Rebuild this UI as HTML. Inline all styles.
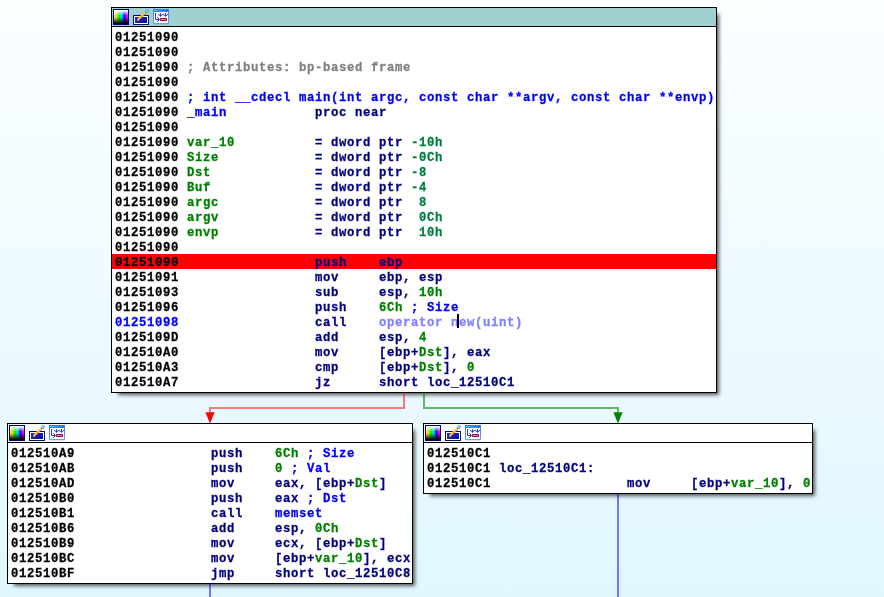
<!DOCTYPE html>
<html><head><meta charset="utf-8"><title>IDA graph view</title>
<style>
html,body{margin:0;padding:0}
body{width:884px;height:597px;overflow:hidden;position:relative;background:#fbfeff;}
#c{position:absolute;left:0;top:0;width:884px;height:597px;overflow:hidden;
background:linear-gradient(to bottom,#fbfeff 0%,#e1f7ff 100%);
font-family:"Liberation Mono",monospace;font-weight:bold;font-size:13.333px;}
.box{position:absolute;border:1px solid #000;background:#fff;box-shadow:4.8px 4.8px 3.8px -2.45px rgba(0,0,0,.65);}
.tb{height:18px;border-bottom:1px solid #000;background:#fff;position:relative}
.sel .tb{background:#a0d0d0}
.tb svg{position:absolute;left:1px;top:1px}
.body{position:absolute;left:0;right:0;top:21px;will-change:transform}
.r{height:15px;line-height:17px;white-space:pre;padding-left:3px;-webkit-text-stroke:0.3px;}
.t{display:inline-block;transform:scaleX(.92);transform-origin:0 0;letter-spacing:.696px}
.hl{background:#ff0000}
.k{color:#000}.g{color:#808080}.b{color:#0000ff}.n{color:#000080}.v{color:#008000}.w{color:#008040}.l{color:#8080ff}
#edges{position:absolute;left:0;top:0}
.cur{position:absolute;left:457px;top:314px;width:2px;height:14px;background:#000}
</style></head>
<body>
<div id="c">
<svg width="0" height="0" style="position:absolute"><defs><linearGradient id="rb" x1="0" x2="1" y1="0" y2="0"><stop offset="0" stop-color="#ffb060"/><stop offset=".08" stop-color="#ffa800"/><stop offset=".18" stop-color="#f0f000"/><stop offset=".36" stop-color="#00f000"/><stop offset=".54" stop-color="#00e0ff"/><stop offset=".72" stop-color="#1010ff"/><stop offset=".92" stop-color="#ff00d0"/><stop offset="1" stop-color="#ff60b0"/></linearGradient><linearGradient id="bk" x1="0" x2="0" y1="0" y2="1"><stop offset="0" stop-color="#fff" stop-opacity="1"/><stop offset=".07" stop-color="#fff" stop-opacity=".9"/><stop offset=".4" stop-color="#fff" stop-opacity="0"/><stop offset=".5" stop-color="#000" stop-opacity="0"/><stop offset=".93" stop-color="#000" stop-opacity=".9"/><stop offset="1" stop-color="#000" stop-opacity="1"/></linearGradient><linearGradient id="wl" x1="0" x2="0" y1="0" y2="1"><stop offset="0" stop-color="#fff" stop-opacity="1"/><stop offset=".5" stop-color="#fff" stop-opacity=".7"/><stop offset="1" stop-color="#fff" stop-opacity="0"/></linearGradient><linearGradient id="bl" x1="0" x2="1" y1="0" y2="1"><stop offset="0" stop-color="#2438c8"/><stop offset="1" stop-color="#0808a0"/></linearGradient><linearGradient id="wf" x1="0" x2="0" y1="0" y2="1"><stop offset="0" stop-color="#2a80f0"/><stop offset=".2" stop-color="#3a84ee"/><stop offset="1" stop-color="#6aa6f2"/></linearGradient><linearGradient id="wt" x1="0" x2="1" y1="0" y2="0"><stop offset="0" stop-color="#40d0ff"/><stop offset="1" stop-color="#3058e0"/></linearGradient><linearGradient id="rd" x1="0" x2="1" y1="0" y2="0"><stop offset="0" stop-color="#b80060"/><stop offset="1" stop-color="#780038"/></linearGradient></defs></svg>
<div class="box sel" style="left:111px;top:7px;width:604px;height:384px">
<div class="tb"><svg width="56" height="16" viewBox="0 0 56 16"><rect x="0.5" y="0.5" width="15" height="15" fill="url(#rb)" stroke="#000080"/><rect x="1" y="1" width="14" height="14" fill="url(#bk)"/><rect x="1" y="1" width="1" height="12" fill="url(#wl)"/><rect x="20.5" y="6.5" width="15" height="9" fill="#fff" stroke="#0000a0"/><path d="M35.500 7v8.500H21" fill="none" stroke="#001858"/><rect x="22" y="8" width="12" height="6" fill="url(#bl)"/><path d="M23.4 12.4L24.35 9.75L26.05 11.45z" fill="#f0b848"/><path d="M23.1 12.7L23.7 11L24.9 12.2z" fill="#181008"/><path d="M24.35 9.75L31.75 2.55L32.65 3.45L25.25 10.65z" fill="#ffc418"/><path d="M25.15 10.55L32.55 3.35L33.45 4.25L26.05 11.45z" fill="#e87818"/><path d="M25.2 10.6L32.6 3.4" stroke="#fff" stroke-width=".85" stroke-dasharray=".9 .5" fill="none"/><ellipse cx="33.9" cy="2.1" rx="2.1" ry="1.55" transform="rotate(-45 33.9 2.1)" fill="#3a9ccc"/><ellipse cx="34" cy="2" rx="1.05" ry=".55" transform="rotate(-45 34 2)" fill="#fff"/><rect x="40" y="0" width="16" height="15" fill="url(#wf)"/><rect x="41" y="1" width="14" height="1" fill="url(#wt)"/><rect x="41" y="3" width="14" height="11" fill="#fff"/><rect x="40.500" y="15" width="15" height=".6" fill="#5a8ad8" opacity=".35"/><g fill="none" stroke="#1010f0" stroke-width=".85"><path d="M42.500 4V10.500H46"/><path d="M44.300 8.300L46.500 10.500L44.300 12.700" stroke-width=".95"/><path d="M45 5.500h1M49 5.500h2M54 5.500h1" stroke="#2030f0"/><path d="M47.500 4v3.200M52.500 4v3.200"/><path d="M46 5.700l1.500 1.700l1.500 -1.700M51 5.700l1.500 1.700l1.500 -1.700" stroke-width=".95"/></g><rect x="47" y="9" width="7" height="3" rx=".8" fill="url(#rd)"/><rect x="48" y="10" width="5" height="1" fill="#ffa018"/></svg></div>
<div class="body">
<div class="r"><span class="t"><span class="k">01251090</span></span></div>
<div class="r"><span class="t"><span class="k">01251090</span></span></div>
<div class="r"><span class="t"><span class="k">01251090 </span><span class="g">; Attributes: bp-based frame</span></span></div>
<div class="r"><span class="t"><span class="k">01251090</span></span></div>
<div class="r"><span class="t"><span class="k">01251090 </span><span class="b">; int __cdecl main(int argc, const char **argv, const char **envp)</span></span></div>
<div class="r"><span class="t"><span class="k">01251090 </span><span class="b">_main           </span><span class="n">proc near</span></span></div>
<div class="r"><span class="t"><span class="k">01251090</span></span></div>
<div class="r"><span class="t"><span class="k">01251090 </span><span class="v">var_10          </span><span class="n">= dword ptr </span><span class="w">-10h</span></span></div>
<div class="r"><span class="t"><span class="k">01251090 </span><span class="v">Size            </span><span class="n">= dword ptr </span><span class="w">-0Ch</span></span></div>
<div class="r"><span class="t"><span class="k">01251090 </span><span class="v">Dst             </span><span class="n">= dword ptr </span><span class="w">-8</span></span></div>
<div class="r"><span class="t"><span class="k">01251090 </span><span class="v">Buf             </span><span class="n">= dword ptr </span><span class="w">-4</span></span></div>
<div class="r"><span class="t"><span class="k">01251090 </span><span class="v">argc            </span><span class="n">= dword ptr </span><span class="w"> 8</span></span></div>
<div class="r"><span class="t"><span class="k">01251090 </span><span class="v">argv            </span><span class="n">= dword ptr </span><span class="w"> 0Ch</span></span></div>
<div class="r"><span class="t"><span class="k">01251090 </span><span class="v">envp            </span><span class="n">= dword ptr </span><span class="w"> 10h</span></span></div>
<div class="r"><span class="t"><span class="k">01251090</span></span></div>
<div class="r hl"><span class="t"><span class="k">01251090                 </span><span class="n">push    </span><span class="n">ebp</span></span></div>
<div class="r"><span class="t"><span class="k">01251091                 </span><span class="n">mov     </span><span class="n">ebp, esp</span></span></div>
<div class="r"><span class="t"><span class="k">01251093                 </span><span class="n">sub     </span><span class="n">esp, </span><span class="v">10h</span></span></div>
<div class="r"><span class="t"><span class="k">01251096                 </span><span class="n">push    </span><span class="v">6Ch</span><span class="b"> ; Size</span></span></div>
<div class="r"><span class="t"><span class="b">01251098                 </span><span class="n">call    </span><span class="l">operator new(uint)</span></span></div>
<div class="r"><span class="t"><span class="k">0125109D                 </span><span class="n">add     </span><span class="n">esp, </span><span class="v">4</span></span></div>
<div class="r"><span class="t"><span class="k">012510A0                 </span><span class="n">mov     </span><span class="n">[ebp+</span><span class="v">Dst</span><span class="n">], eax</span></span></div>
<div class="r"><span class="t"><span class="k">012510A3                 </span><span class="n">cmp     </span><span class="n">[ebp+</span><span class="v">Dst</span><span class="n">], </span><span class="v">0</span></span></div>
<div class="r"><span class="t"><span class="k">012510A7                 </span><span class="n">jz      </span><span class="n">short loc_12510C1</span></span></div>
</div>
</div>
<div class="box" style="left:7px;top:423px;width:404px;height:159px">
<div class="tb"><svg width="56" height="16" viewBox="0 0 56 16"><rect x="0.5" y="0.5" width="15" height="15" fill="url(#rb)" stroke="#000080"/><rect x="1" y="1" width="14" height="14" fill="url(#bk)"/><rect x="1" y="1" width="1" height="12" fill="url(#wl)"/><rect x="20.5" y="6.5" width="15" height="9" fill="#fff" stroke="#0000a0"/><path d="M35.500 7v8.500H21" fill="none" stroke="#001858"/><rect x="22" y="8" width="12" height="6" fill="url(#bl)"/><path d="M23.4 12.4L24.35 9.75L26.05 11.45z" fill="#f0b848"/><path d="M23.1 12.7L23.7 11L24.9 12.2z" fill="#181008"/><path d="M24.35 9.75L31.75 2.55L32.65 3.45L25.25 10.65z" fill="#ffc418"/><path d="M25.15 10.55L32.55 3.35L33.45 4.25L26.05 11.45z" fill="#e87818"/><path d="M25.2 10.6L32.6 3.4" stroke="#fff" stroke-width=".85" stroke-dasharray=".9 .5" fill="none"/><ellipse cx="33.9" cy="2.1" rx="2.1" ry="1.55" transform="rotate(-45 33.9 2.1)" fill="#3a9ccc"/><ellipse cx="34" cy="2" rx="1.05" ry=".55" transform="rotate(-45 34 2)" fill="#fff"/><rect x="40" y="0" width="16" height="15" fill="url(#wf)"/><rect x="41" y="1" width="14" height="1" fill="url(#wt)"/><rect x="41" y="3" width="14" height="11" fill="#fff"/><rect x="40.500" y="15" width="15" height=".6" fill="#5a8ad8" opacity=".35"/><g fill="none" stroke="#1010f0" stroke-width=".85"><path d="M42.500 4V10.500H46"/><path d="M44.300 8.300L46.500 10.500L44.300 12.700" stroke-width=".95"/><path d="M45 5.500h1M49 5.500h2M54 5.500h1" stroke="#2030f0"/><path d="M47.500 4v3.200M52.500 4v3.200"/><path d="M46 5.700l1.500 1.700l1.500 -1.700M51 5.700l1.500 1.700l1.500 -1.700" stroke-width=".95"/></g><rect x="47" y="9" width="7" height="3" rx=".8" fill="url(#rd)"/><rect x="48" y="10" width="5" height="1" fill="#ffa018"/></svg></div>
<div class="body">
<div class="r"><span class="t"><span class="k">012510A9                 </span><span class="n">push    </span><span class="v">6Ch</span><span class="b"> ; Size</span></span></div>
<div class="r"><span class="t"><span class="k">012510AB                 </span><span class="n">push    </span><span class="v">0</span><span class="b"> ; Val</span></span></div>
<div class="r"><span class="t"><span class="k">012510AD                 </span><span class="n">mov     </span><span class="n">eax, [ebp+</span><span class="v">Dst</span><span class="n">]</span></span></div>
<div class="r"><span class="t"><span class="k">012510B0                 </span><span class="n">push    </span><span class="n">eax</span><span class="b"> ; Dst</span></span></div>
<div class="r"><span class="t"><span class="k">012510B1                 </span><span class="n">call    </span><span class="b">memset</span></span></div>
<div class="r"><span class="t"><span class="k">012510B6                 </span><span class="n">add     </span><span class="n">esp, </span><span class="v">0Ch</span></span></div>
<div class="r"><span class="t"><span class="k">012510B9                 </span><span class="n">mov     </span><span class="n">ecx, [ebp+</span><span class="v">Dst</span><span class="n">]</span></span></div>
<div class="r"><span class="t"><span class="k">012510BC                 </span><span class="n">mov     </span><span class="n">[ebp+</span><span class="v">var_10</span><span class="n">], ecx</span></span></div>
<div class="r"><span class="t"><span class="k">012510BF                 </span><span class="n">jmp     </span><span class="n">short loc_12510C8</span></span></div>
</div>
</div>
<div class="box" style="left:423px;top:423px;width:388px;height:69px">
<div class="tb"><svg width="56" height="16" viewBox="0 0 56 16"><rect x="0.5" y="0.5" width="15" height="15" fill="url(#rb)" stroke="#000080"/><rect x="1" y="1" width="14" height="14" fill="url(#bk)"/><rect x="1" y="1" width="1" height="12" fill="url(#wl)"/><rect x="20.5" y="6.5" width="15" height="9" fill="#fff" stroke="#0000a0"/><path d="M35.500 7v8.500H21" fill="none" stroke="#001858"/><rect x="22" y="8" width="12" height="6" fill="url(#bl)"/><path d="M23.4 12.4L24.35 9.75L26.05 11.45z" fill="#f0b848"/><path d="M23.1 12.7L23.7 11L24.9 12.2z" fill="#181008"/><path d="M24.35 9.75L31.75 2.55L32.65 3.45L25.25 10.65z" fill="#ffc418"/><path d="M25.15 10.55L32.55 3.35L33.45 4.25L26.05 11.45z" fill="#e87818"/><path d="M25.2 10.6L32.6 3.4" stroke="#fff" stroke-width=".85" stroke-dasharray=".9 .5" fill="none"/><ellipse cx="33.9" cy="2.1" rx="2.1" ry="1.55" transform="rotate(-45 33.9 2.1)" fill="#3a9ccc"/><ellipse cx="34" cy="2" rx="1.05" ry=".55" transform="rotate(-45 34 2)" fill="#fff"/><rect x="40" y="0" width="16" height="15" fill="url(#wf)"/><rect x="41" y="1" width="14" height="1" fill="url(#wt)"/><rect x="41" y="3" width="14" height="11" fill="#fff"/><rect x="40.500" y="15" width="15" height=".6" fill="#5a8ad8" opacity=".35"/><g fill="none" stroke="#1010f0" stroke-width=".85"><path d="M42.500 4V10.500H46"/><path d="M44.300 8.300L46.500 10.500L44.300 12.700" stroke-width=".95"/><path d="M45 5.500h1M49 5.500h2M54 5.500h1" stroke="#2030f0"/><path d="M47.500 4v3.200M52.500 4v3.200"/><path d="M46 5.700l1.500 1.700l1.500 -1.700M51 5.700l1.500 1.700l1.500 -1.700" stroke-width=".95"/></g><rect x="47" y="9" width="7" height="3" rx=".8" fill="url(#rd)"/><rect x="48" y="10" width="5" height="1" fill="#ffa018"/></svg></div>
<div class="body">
<div class="r"><span class="t"><span class="k">012510C1</span></span></div>
<div class="r"><span class="t"><span class="k">012510C1 </span><span class="n">loc_12510C1:</span></span></div>
<div class="r"><span class="t"><span class="k">012510C1                 </span><span class="n">mov     </span><span class="n">[ebp+</span><span class="v">var_10</span><span class="n">], </span><span class="v">0</span></span></div>
</div>
</div>
<svg id="edges" width="884" height="597" viewBox="0 0 884 597">
<path d="M404 393V408H210V413" fill="none" stroke="rgba(255,0,0,.5)" stroke-width="2"/>
<path d="M205.400 412.300h9.200L210 423.500z" fill="#ff0000"/>
<path d="M424 393V408H618V413" fill="none" stroke="rgba(0,128,0,.56)" stroke-width="2"/>
<path d="M613.400 412.300h9.200L618 423.500z" fill="#008000"/>
<path d="M210 584V597" fill="none" stroke="rgba(0,0,255,.52)" stroke-width="2"/>
<path d="M618 494V597" fill="none" stroke="rgba(0,0,255,.52)" stroke-width="2"/>
</svg>
<div class="cur"></div>
</div>
</body></html>
